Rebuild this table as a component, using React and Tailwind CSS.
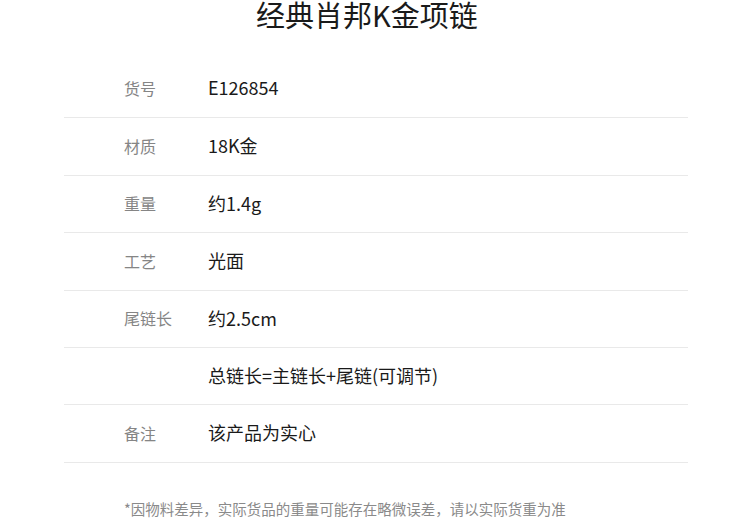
import React from "react";

const rows = [
  ["货号", "E126854", "h-[58px]"],
  ["材质", "18K金", "h-[58px]"],
  ["重量", "约1.4g", "h-[57px]"],
  ["工艺", "光面", "h-[58px]"],
  ["尾链长", "约2.5cm", "h-[57px]"],
  ["", "总链长=主链长+尾链(可调节)", "h-[57px]"],
  ["备注", "该产品为实心", "h-[58px]"],
];

export default function App() {
  return (
    <div
      className="w-[750px] h-[519px] bg-white overflow-hidden text-[#1a1a1a]"
      style={{ fontFamily: '"Noto Sans CJK SC", "Noto Sans", sans-serif' }}
    >
      <div className="h-[60px] pl-[256px]">
        <div className="text-[29px] leading-[29px] text-[#1a1a1a]">
          经典肖邦K金项链
        </div>
      </div>
      <div className="ml-[64px] w-[624px]">
        {rows.map(([label, value, h], i) => (
          <div
            key={i}
            className={`flex items-center pb-[2px] border-b border-[#e9e9e9] ${h}`}
          >
            <div className="w-[144px] pl-[60px] text-[16px] text-[#858585]">
              {label}
            </div>
            <div className="text-[18px] text-[#1a1a1a]">{value}</div>
          </div>
        ))}
      </div>
      <div className="pl-[124px] pt-[36px] text-[14.5px] leading-[20px] text-[#8a8a8a]">
        *因物料差异，实际货品的重量可能存在略微误差，请以实际货重为准
      </div>
    </div>
  );
}
